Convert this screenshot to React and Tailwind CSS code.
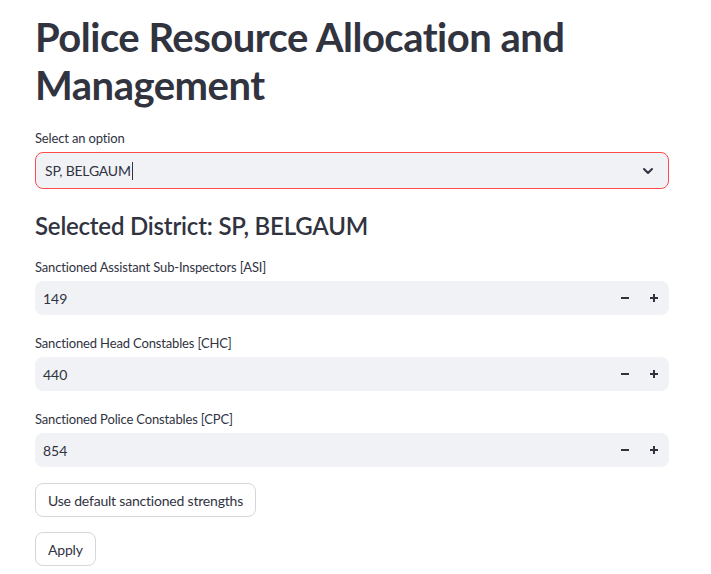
import { ChevronDown } from 'lucide-react'

const font = { fontFamily: '"Source Sans Pro", Lato, "Noto Sans", sans-serif' }

const NumberField = ({ label, value }) => (
  <div className="flex flex-col">
    <label className="text-[13px] leading-[20px] tracking-[-0.15px] mb-[4px]">{label}</label>
    <div className="flex items-center h-[34px] bg-[#f0f2f6] rounded-[8px]">
      <span className="flex-1 pl-[8px] text-[14px]">{value}</span>
      <button className="w-[29px] h-full flex items-center justify-center">
        <svg width="10" height="10" viewBox="0 0 10 10">
          <path d="M1 5h8" stroke="#31333f" strokeWidth="2" />
        </svg>
      </button>
      <button className="w-[29px] h-full flex items-center justify-center mr-[1px]">
        <svg width="10" height="10" viewBox="0 0 10 10">
          <path d="M1 5h8M5 1v8" stroke="#31333f" strokeWidth="2" />
        </svg>
      </button>
    </div>
  </div>
)

export default function App() {
  return (
    <div className="min-h-screen bg-white text-[#31333f]" style={font}>
      <div className="w-[634px] ml-[35px] pt-[13px] flex flex-col">
        {/* Title */}
        <h1 className="text-[40px] leading-[48px] font-bold tracking-[-0.5px]">
          Police Resource Allocation and Management
        </h1>

        {/* Select */}
        <div className="mt-[19px] flex flex-col">
          <label className="text-[13px] leading-[20px] tracking-[-0.15px] mb-[4px]">Select an option</label>
          <div className="flex items-center h-[37px] bg-[#f0f2f6] border border-[#ff4b4b] rounded-[8px] pl-[9px] pr-[12px]">
            <span className="text-[14px] tracking-[-0.2px]">SP, BELGAUM</span>
            <span className="w-px h-[18px] bg-[#31333f] ml-[1px]"></span>
            <span className="flex-1"></span>
            <ChevronDown size={16} strokeWidth={3} />
          </div>
        </div>

        {/* District heading */}
        <h3 className="mt-[20px] text-[24px] leading-[34px] font-semibold tracking-[-0.2px]">
          Selected District: SP, BELGAUM
        </h3>

        <div className="mt-[14px] flex flex-col gap-[18px]">
          <NumberField label="Sanctioned Assistant Sub-Inspectors [ASI]" value="149" />
          <NumberField label="Sanctioned Head Constables [CHC]" value="440" />
          <NumberField label="Sanctioned Police Constables [CPC]" value="854" />
        </div>

        <div className="mt-[16px] flex flex-col items-start gap-[15px]">
          <button className="h-[34px] px-[12px] border border-[#d6d6d9] rounded-[8px] bg-white text-[14px] tracking-[-0.2px]">
            Use default sanctioned strengths
          </button>
          <button className="h-[34px] px-[12px] border border-[#d6d6d9] rounded-[8px] bg-white text-[14px] tracking-[-0.2px]">
            Apply
          </button>
        </div>
      </div>
    </div>
  )
}
